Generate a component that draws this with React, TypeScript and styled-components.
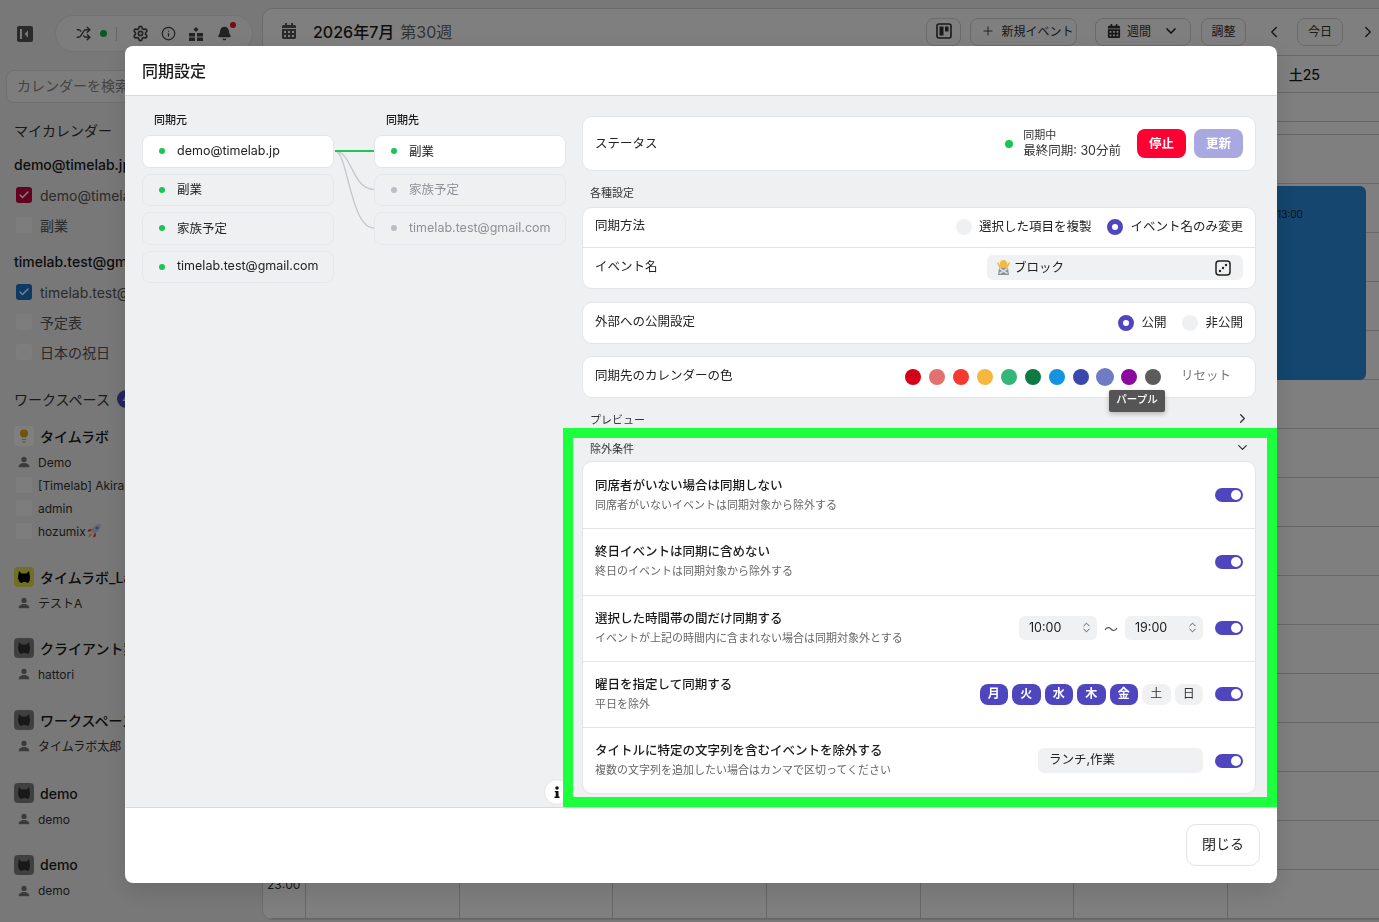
import React from 'react';
import styled, { createGlobalStyle } from 'styled-components';
import { Bell, Check, ChevronDown, ChevronLeft, ChevronRight, ChevronsUpDown, Info, Lightbulb, Plus, Settings, Shuffle } from 'lucide-react';
import { BsPersonFill } from 'react-icons/bs';
import { FaCalendarAlt } from 'react-icons/fa';

const INDIGO = '#4f46bf';

const SWATCHES = ['#d50018', '#e46f6f', '#f53b2e', '#f6b73c', '#33b679', '#0e7a42', '#1493e0', '#3949ab', '#6f7cc4', '#8a0a9e', '#5c5c5c'];
const DAYS = [
  { label: '月', on: true },
  { label: '火', on: true },
  { label: '水', on: true },
  { label: '木', on: true },
  { label: '金', on: true },
  { label: '土', on: false },
  { label: '日', on: false },
];

const GlobalStyle = createGlobalStyle`
  html, body {
    margin: 0;
    height: 100%;
    overflow: hidden;
    background: #f0f0f0;
    color: #1a1a1a;
    font-family: Inter, "Noto Sans CJK JP", sans-serif;
  }
  * { box-sizing: border-box; }
`;

function PanelIcon() {
  return (
    <svg width="18" height="18" viewBox="0 0 18 18">
      <path fill="#555" fillRule="evenodd" d="M3 1h12a2 2 0 0 1 2 2v12a2 2 0 0 1-2 2H3a2 2 0 0 1-2-2V3a2 2 0 0 1 2-2zm1 3v10h2V4zm8 1.500L8.500 9l3.500 3.500z" />
    </svg>
  );
}

function BlocksIcon() {
  return (
    <svg width="16" height="16" viewBox="0 0 16 16" fill="#444">
      <path d="M8 1l2.500 2.500L8 6 5.500 3.500z" />
      <rect x="1" y="7" width="6" height="3.500" />
      <rect x="9" y="7" width="6" height="3.500" />
      <rect x="1" y="11.500" width="6" height="3.500" />
      <rect x="9" y="11.500" width="6" height="3.500" />
    </svg>
  );
}

function BoardIcon() {
  return (
    <svg width="16" height="16" viewBox="0 0 16 16">
      <rect x="1" y="1" width="14" height="14" rx="2" fill="none" stroke="#333" strokeWidth="1.600" />
      <rect x="3.500" y="3.500" width="4" height="9" fill="#333" />
      <rect x="9" y="3.500" width="3.500" height="5" fill="#333" />
    </svg>
  );
}

function DiceIcon() {
  return (
    <svg width="16" height="16" viewBox="0 0 16 16" fill="#222">
      <rect x="1" y="1" width="14" height="14" rx="3" fill="none" stroke="#222" strokeWidth="1.500" />
      <circle cx="5" cy="11" r="1.200" />
      <circle cx="8" cy="8" r="1.200" />
      <circle cx="11" cy="5" r="1.200" />
    </svg>
  );
}

function CatLogo({ color }: { color: string }) {
  return (
    <svg width="14" height="14" viewBox="0 0 14 14">
      <path fill={color} d="M2 1l2.500 2.500h5L12 1l1 6c0 3-1 6-2.500 6-.8 0-1-1-1.500-1H6c-.5 0-.7 1-1.500 1C3 13 1 10 1 7z" />
    </svg>
  );
}

function RocketEmoji() {
  return (
    <svg width="16" height="16" viewBox="0 0 16 16">
      <path fill="#c8d0dc" d="M15 1c-4 0-7 2-9 5L4.500 8l3.500 3.500L10 10c3-2 5-5 5-9z" />
      <path fill="#5a8fd6" d="M11 3.500a1.500 1.500 0 1 0 .01 0z" />
      <path fill="#e0242e" d="M6 6L2.500 6.500 1.500 9 4.500 8zM10 10l-.5 3.500L7 14.500 8 11.500z" />
      <path fill="#f5a623" d="M4 10l2 2-4 3z" />
    </svg>
  );
}

function PersonEmoji() {
  return (
    <svg width="15" height="16" viewBox="0 0 15 16">
      <path fill="#8b8f96" d="M3 9h9l1 7H2z" />
      <path fill="#f4b942" d="M2 3l2 3h7l2-3 1 1-2.500 5h-8L1 4z" />
      <circle cx="7.500" cy="4.500" r="3.500" fill="#f4b942" />
      <path stroke="#d9dce0" strokeWidth="1.500" d="M3.500 9.500l8 5M11.500 9.500l-8 5" />
    </svg>
  );
}

function HelpGlyph() {
  return (
    <svg width="6" height="12" viewBox="0 0 6 12" fill="#111">
      <circle cx="3" cy="2" r="1.800" />
      <path d="M.8 5h3.700v5.500H5.500V12H.5v-1.500h1.200V6.300H.8z" />
    </svg>
  );
}

function Toggle() {
  return (
    <ToggleTrack>
      <ToggleKnob />
    </ToggleTrack>
  );
}

function RadioOption({ label, checked }: { label: string; checked?: boolean }) {
  return (
    <RadioLabel>
      <RadioMark $checked={checked} />
      {label}
    </RadioLabel>
  );
}

function TimeSelect({ value }: { value: string }) {
  return (
    <SelectBox>
      {value}
      <ChevronsUpDown size={13} color="#444" strokeWidth={1.600} />
    </SelectBox>
  );
}

function Member({ name, empty, children }: { name: string; empty?: boolean; children?: React.ReactNode }) {
  return (
    <MemberRow>
      <MemberIcon>{empty ? <EmptyBox /> : <BsPersonFill size={14} color="#777" />}</MemberIcon>
      {name}
      {children}
    </MemberRow>
  );
}

function Workspace({ name, logo, top = 22, children }: { name: string; logo: React.ReactNode; top?: number; children: React.ReactNode }) {
  return (
    <WorkspaceGroup $top={top}>
      <WorkspaceHead>
        {logo}
        {name}
      </WorkspaceHead>
      {children}
    </WorkspaceGroup>
  );
}

function CalendarCheck({ label, color }: { label: string; color?: string }) {
  return (
    <CheckRow>
      <CheckBox $color={color}>{color && <Check size={12} color="#fff" strokeWidth={3} />}</CheckBox>
      {label}
    </CheckRow>
  );
}

function Sidebar() {
  return (
    <Side>
      <TopRow>
        <PanelIcon />
        <ToolPill>
          <Shuffle size={15} color="#444" strokeWidth={2.200} />
          <StatusLed />
          <ToolDivider />
          <Settings size={17} color="#444" strokeWidth={2.400} />
          <Info size={15} color="#444" strokeWidth={2} />
          <BlocksIcon />
          <BellWrap>
            <Bell size={15} color="#444" fill="#444" />
            <BellBadge />
          </BellWrap>
        </ToolPill>
      </TopRow>
      <SearchBox>カレンダーを検索</SearchBox>
      <SectionTitle>マイカレンダー</SectionTitle>
      <AccountName>demo@timelab.jp</AccountName>
      <CheckList>
        <CalendarCheck label="demo@timelab.jp" color="#c9003f" />
        <CalendarCheck label="副業" />
      </CheckList>
      <AccountName $second>timelab.test@gmail.com</AccountName>
      <CheckList>
        <CalendarCheck label="timelab.test@gmail.com" color="#1a73c8" />
        <CalendarCheck label="予定表" />
        <CalendarCheck label="日本の祝日" />
      </CheckList>
      <WorkspaceTitle>
        ワークスペース
        <CountBadge>4</CountBadge>
      </WorkspaceTitle>
      <Workspace
        top={15}
        name="タイムラボ"
        logo={
          <LogoBox $bg="#ffffff">
            <Lightbulb size={14} color="#e8a813" fill="#e8a813" />
          </LogoBox>
        }
      >
        <Member name="Demo" />
        <Member name="[Timelab] Akira Suzuki" empty />
        <Member name="admin" empty />
        <Member name="hozumix" empty>
          <RocketEmoji />
        </Member>
      </Workspace>
      <Workspace name="タイムラボ_Lab" logo={<LogoBox $bg="#dfe04a"><CatLogo color="#000" /></LogoBox>}>
        <Member name="テストA" />
      </Workspace>
      <Workspace name="クライアント案件" logo={<LogoBox $bg="#808080"><CatLogo color="#333" /></LogoBox>}>
        <Member name="hattori" />
      </Workspace>
      <Workspace name="ワークスペース" logo={<LogoBox $bg="#808080"><CatLogo color="#333" /></LogoBox>}>
        <Member name="タイムラボ太郎" />
      </Workspace>
      <Workspace top={24} name="demo" logo={<LogoBox $bg="#808080"><CatLogo color="#333" /></LogoBox>}>
        <Member name="demo" />
      </Workspace>
      <Workspace name="demo" logo={<LogoBox $bg="#808080"><CatLogo color="#333" /></LogoBox>}>
        <Member name="demo" />
      </Workspace>
    </Side>
  );
}

function CalendarPanel() {
  return (
    <Main>
      <MainHeader>
        <TitleGroup>
          <FaCalendarAlt size={16} color="#555" />
          <MonthTitle>2026年7月</MonthTitle>
          <WeekTitle>第30週</WeekTitle>
        </TitleGroup>
        <HeaderActions>
          <HeaderButton $w={35}>
            <BoardIcon />
          </HeaderButton>
          <HeaderButton $w={107} $ml={9} $pl={8}>
            <Plus size={14} color="#333" strokeWidth={1.500} />
            新規イベント
          </HeaderButton>
          <HeaderButton $w={96} $ml={18}>
            <FaCalendarAlt size={14} color="#333" />
            週間
            <ViewChevron size={16} color="#222" strokeWidth={2.500} />
          </HeaderButton>
          <HeaderButton $w={45} $ml={10}>
            調整
          </HeaderButton>
          <NavArrow $ml={19}>
            <ChevronLeft size={18} color="#333" />
          </NavArrow>
          <HeaderButton $w={46} $ml={14}>
            今日
          </HeaderButton>
          <NavArrow $ml={16}>
            <ChevronRight size={18} color="#333" />
          </NavArrow>
        </HeaderActions>
      </MainHeader>
      <DayHeader>
        <DayLabel>土25</DayLabel>
      </DayHeader>
      <AllDayBand />
      <TimeGrid>
        <TimeAxis>
          <HourLabel>23:00</HourLabel>
        </TimeAxis>
        <DayColumn />
        <DayColumn />
        <DayColumn />
        <DayColumn />
        <DayColumn />
        <DayColumn />
        <DayColumn>
          <EventBlock>13:00</EventBlock>
        </DayColumn>
      </TimeGrid>
    </Main>
  );
}

function SyncColumns() {
  return (
    <SyncPane>
      <SyncColumn>
        <ColumnLabel>同期元</ColumnLabel>
        <SyncCard $active><SyncDot />demo@timelab.jp</SyncCard>
        <SyncCard><SyncDot />副業</SyncCard>
        <SyncCard><SyncDot />家族予定</SyncCard>
        <SyncCard><SyncDot />timelab.test@gmail.com</SyncCard>
      </SyncColumn>
      <ConnectorSvg width="40" height="110" viewBox="0 0 40 110">
        <path d="M1 16C18 16 18 54.500 40 54.500" fill="none" stroke="#c6c7ca" strokeWidth="1.300" />
        <path d="M1 16C14 16 16 93 40 93" fill="none" stroke="#c6c7ca" strokeWidth="1.300" />
        <path d="M1 16H40" fill="none" stroke="#1fc64f" strokeWidth="2" />
      </ConnectorSvg>
      <SyncColumn>
        <ColumnLabel>同期先</ColumnLabel>
        <SyncCard $active><SyncDot />副業</SyncCard>
        <SyncCard $muted><SyncDot $muted />家族予定</SyncCard>
        <SyncCard $muted><SyncDot $muted />timelab.test@gmail.com</SyncCard>
      </SyncColumn>
    </SyncPane>
  );
}

function SettingsPane() {
  return (
    <SettingsColumn>
      <Card>
        <StatusRow>
          <StatusLabel>ステータス</StatusLabel>
          <StatusGroup>
            <SyncState>
              <SyncStateDot />
              <SyncStateText>
                <small>同期中</small>
                <span>最終同期: 30分前</span>
              </SyncStateText>
            </SyncState>
            <ActionButton $bg="#ff0033">停止</ActionButton>
            <ActionButton $bg="#a9a8e0">更新</ActionButton>
          </StatusGroup>
        </StatusRow>
      </Card>

      <SectionHead>各種設定</SectionHead>
      <Card>
        <Row $h={38.5}>
          <RowLabel>同期方法</RowLabel>
          <RadioGroup>
            <RadioOption label="選択した項目を複製" />
            <RadioOption label="イベント名のみ変更" checked />
          </RadioGroup>
        </Row>
        <Row $h={40}>
          <RowLabel>イベント名</RowLabel>
          <NameField>
            <NameValue>
              <PersonEmoji />
              ブロック
            </NameValue>
            <DiceIcon />
          </NameField>
        </Row>
      </Card>

      <Card $top={13}>
        <Row $h={40}>
          <RowLabel>外部への公開設定</RowLabel>
          <RadioGroup>
            <RadioOption label="公開" checked />
            <RadioOption label="非公開" />
          </RadioGroup>
        </Row>
      </Card>

      <Card $top={12}>
        <Row $h={40}>
          <RowLabel>同期先のカレンダーの色</RowLabel>
          <ColorGroup>
            <SwatchList>
              {SWATCHES.map((color, i) => (
                <Swatch key={color} $color={color} $hover={i === 8}>
                  {i === 8 && <Tooltip>パープル</Tooltip>}
                </Swatch>
              ))}
            </SwatchList>
            <ResetLink>リセット</ResetLink>
          </ColorGroup>
        </Row>
      </Card>

      <CollapseHead $top={13}>
        プレビュー
        <ChevronRight size={15} color="#333" />
      </CollapseHead>
      <CollapseHead $top={13}>
        除外条件
        <ChevronDown size={15} color="#333" />
      </CollapseHead>
      <Card $top={5.5}>
        <RuleRow>
          <RuleText>
            <RuleTitle>同席者がいない場合は同期しない</RuleTitle>
            <RuleNote>同席者がいないイベントは同期対象から除外する</RuleNote>
          </RuleText>
          <Toggle />
        </RuleRow>
        <RuleRow>
          <RuleText>
            <RuleTitle>終日イベントは同期に含めない</RuleTitle>
            <RuleNote>終日のイベントは同期対象から除外する</RuleNote>
          </RuleText>
          <Toggle />
        </RuleRow>
        <RuleRow>
          <RuleText>
            <RuleTitle>選択した時間帯の間だけ同期する</RuleTitle>
            <RuleNote>イベントが上記の時間内に含まれない場合は同期対象外とする</RuleNote>
          </RuleText>
          <RuleControls>
            <TimeSelect value="10:00" />
            <Tilde>〜</Tilde>
            <TimeSelect value="19:00" />
            <ToggleGap>
              <Toggle />
            </ToggleGap>
          </RuleControls>
        </RuleRow>
        <RuleRow>
          <RuleText>
            <RuleTitle>曜日を指定して同期する</RuleTitle>
            <RuleNote>平日を除外</RuleNote>
          </RuleText>
          <RuleControls>
            <DayList>
              {DAYS.map(d => (
                <DayPill key={d.label} $on={d.on}>
                  {d.label}
                </DayPill>
              ))}
            </DayList>
            <ToggleGap>
              <Toggle />
            </ToggleGap>
          </RuleControls>
        </RuleRow>
        <RuleRow>
          <RuleText>
            <RuleTitle>タイトルに特定の文字列を含むイベントを除外する</RuleTitle>
            <RuleNote>複数の文字列を追加したい場合はカンマで区切ってください</RuleNote>
          </RuleText>
          <RuleControls>
            <KeywordField>ランチ,作業</KeywordField>
            <ToggleGap>
              <Toggle />
            </ToggleGap>
          </RuleControls>
        </RuleRow>
      </Card>
    </SettingsColumn>
  );
}

function App() {
  return (
    <>
      <GlobalStyle />
      <Page>
        <Sidebar />
        <CalendarPanel />
      </Page>
      <Backdrop />
      <Modal>
        <ModalHeader>同期設定</ModalHeader>
        <ModalBody>
          <SyncColumns />
          <SettingsPane />
          <FloatingHelp>
            <HelpGlyph />
          </FloatingHelp>
        </ModalBody>
        <ModalFooter>
          <CloseButton>閉じる</CloseButton>
        </ModalFooter>
        <Highlight />
      </Modal>
    </>
  );
}

const Page = styled.div`
  display: flex;
  width: 1379px;
  height: 922px;
  overflow: hidden;
`;

const Side = styled.aside`
  flex: 0 0 262px;
  display: flex;
  flex-direction: column;
  padding-top: 15px;
  white-space: nowrap;
  overflow: hidden;
`;

const TopRow = styled.div`
  display: flex;
  align-items: center;
  height: 37px;
  padding-left: 16px;
  gap: 21px;
`;

const ToolPill = styled.div`
  display: flex;
  align-items: center;
  width: 198px;
  height: 37px;
  padding: 0 14px 0 20px;
  gap: 12px;
  background: #fafafa;
  border: 1px solid #e4e4e4;
  border-radius: 19px;
`;

const StatusLed = styled.span`
  width: 7px;
  height: 7px;
  margin-left: -3px;
  border-radius: 50%;
  background: #16b04a;
`;

const ToolDivider = styled.span`
  width: 1px;
  height: 14px;
  background: #c8c8c8;
  margin: 0 3px 0 -3px;
`;

const BellWrap = styled.span`
  position: relative;
  display: flex;
  margin-left: 1px;
`;

const BellBadge = styled.span`
  position: absolute;
  top: -4px;
  right: -4px;
  width: 6px;
  height: 6px;
  border-radius: 50%;
  background: #f01030;
`;

const SearchBox = styled.div`
  margin: 18px 0 0 6px;
  width: 240px;
  height: 33px;
  padding: 0 10px 3px;
  display: flex;
  align-items: center;
  font-size: 14px;
  color: #888;
  background: #fafafa;
  border: 1px solid #e0e0e0;
  border-radius: 8px;
`;

const SectionTitle = styled.div`
  margin: 18px 0 0 14px;
  height: 20px;
  line-height: 20px;
  font-size: 14px;
  color: #333;
`;

const AccountName = styled.div<{ $second?: boolean }>`
  margin: ${p => (p.$second ? 12 : 14)}px 0 0 14px;
  height: 20px;
  line-height: 20px;
  font-size: 14px;
  font-weight: 500;
`;

const CheckList = styled.div`
  display: flex;
  flex-direction: column;
  margin-top: 5px;
`;

const CheckRow = styled.div`
  display: flex;
  align-items: center;
  height: 30px;
  padding-left: 16px;
  gap: 8px;
  font-size: 14px;
  color: #555;
`;

const CheckBox = styled.span<{ $color?: string }>`
  display: flex;
  align-items: center;
  justify-content: center;
  width: 16px;
  height: 16px;
  border-radius: 3px;
  background: ${p => p.$color || '#fafafa'};
`;

const WorkspaceTitle = styled.div`
  display: flex;
  align-items: center;
  gap: 7px;
  margin: 22px 0 0 14px;
  height: 20px;
  font-size: 14px;
  color: #333;
`;

const CountBadge = styled.span`
  width: 18px;
  height: 18px;
  line-height: 18px;
  border-radius: 50%;
  background: #4f46bf;
  color: #fff;
  font-size: 11px;
  text-align: center;
`;

const WorkspaceGroup = styled.div<{ $top: number }>`
  margin-top: ${p => p.$top}px;
`;

const WorkspaceHead = styled.div`
  display: flex;
  align-items: center;
  gap: 6px;
  height: 24px;
  padding-left: 14px;
  margin-bottom: 2.500px;
  font-size: 14px;
  font-weight: 500;
`;

const LogoBox = styled.span<{ $bg: string }>`
  display: flex;
  align-items: center;
  justify-content: center;
  width: 20px;
  height: 20px;
  border-radius: 4px;
  background: ${p => p.$bg};
`;

const MemberRow = styled.div`
  display: flex;
  align-items: center;
  height: 23px;
  padding-left: 16px;
  font-size: 12px;
  color: #333;
`;

const MemberIcon = styled.span`
  display: flex;
  align-items: center;
  justify-content: center;
  width: 16px;
  margin-right: 6px;
`;

const EmptyBox = styled.span`
  width: 16px;
  height: 16px;
  border-radius: 3px;
  background: #fafafa;
`;

const Main = styled.main`
  flex: 1;
  display: flex;
  flex-direction: column;
  margin: 8px -4px 2px 0;
  background: #fff;
  border: 1px solid #d6d6d6;
  border-radius: 10px 0 0 10px;
  overflow: hidden;
`;

const MainHeader = styled.header`
  flex: 0 0 47px;
  display: flex;
  align-items: center;
  justify-content: space-between;
  padding: 0 5px 0 18px;
  border-bottom: 1px solid #cfcfcf;
`;

const TitleGroup = styled.div`
  display: flex;
  align-items: center;
  gap: 6px;
  padding-bottom: 2px;
`;

const MonthTitle = styled.span`
  margin-left: 10px;
  font-size: 16px;
  font-weight: 500;
`;

const WeekTitle = styled.span`
  font-size: 16px;
  color: #666;
`;

const HeaderActions = styled.div`
  display: flex;
  align-items: center;
`;

const HeaderButton = styled.div<{ $w: number; $ml?: number; $pl?: number }>`
  display: flex;
  align-items: center;
  justify-content: center;
  gap: 6px;
  width: ${p => p.$w}px;
  height: 28px;
  margin-left: ${p => p.$ml || 0}px;
  padding: 0 0 3px ${p => p.$pl || 0}px;
  border: 1px solid #d6d6d6;
  border-radius: 8px;
  font-size: 12px;
  color: #333;
`;

const ViewChevron = styled(ChevronDown)`
  margin-left: 6px;
`;

const NavArrow = styled.span<{ $ml: number }>`
  display: flex;
  margin-left: ${p => p.$ml}px;
`;

const DayHeader = styled.div`
  flex: 0 0 37px;
  display: flex;
  align-items: center;
  justify-content: flex-end;
  padding-right: 62px;
  border-bottom: 1px solid #cfcfcf;
`;

const DayLabel = styled.span`
  font-size: 14px;
  font-weight: 500;
`;

const AllDayBand = styled.div`
  flex: 0 0 42px;
  border-bottom: 1px solid #cfcfcf;
  background: linear-gradient(#fff 28px, #cfcfcf 28px, #cfcfcf 29px, #fff 29px);
`;

const TimeGrid = styled.div`
  flex: 1;
  display: grid;
  grid-template-columns: 42px repeat(7, 153.7px);
  background: repeating-linear-gradient(#fff 0, #fff 48px, #cfcfcf 48px, #cfcfcf 49px);
`;

const TimeAxis = styled.div`
  position: relative;
`;

const HourLabel = styled.span`
  position: absolute;
  left: 4px;
  top: 742px;
  font-size: 12px;
  color: #333;
`;

const DayColumn = styled.div`
  position: relative;
  border-left: 1px solid #cfcfcf;
`;

const EventBlock = styled.div`
  position: absolute;
  left: 0;
  right: 15px;
  top: 51px;
  height: 194px;
  padding: 22px 0 0 49px;
  background: #288cde;
  border-radius: 6px;
  font-size: 10px;
  color: #222;
`;

const Backdrop = styled.div`
  position: fixed;
  inset: 0;
  background: rgba(0, 0, 0, 0.5);
`;

const Modal = styled.section`
  position: fixed;
  left: 125px;
  top: 46px;
  width: 1152px;
  height: 837px;
  display: flex;
  flex-direction: column;
  background: #fff;
  border-radius: 8px;
  overflow: hidden;
  box-shadow: 0 8px 24px rgba(0, 0, 0, 0.12);
`;

const ModalHeader = styled.h2`
  flex: 0 0 50px;
  margin: 0;
  padding: 1px 17px 0;
  line-height: 48px;
  font-size: 16px;
  font-weight: 500;
  border-bottom: 1px solid #d9dadd;
`;

const ModalBody = styled.div`
  position: relative;
  flex: 1;
  min-height: 0;
  display: flex;
  gap: 16px;
  padding: 0 21px 0 17px;
  background: #eff0f2;
  overflow: hidden;
`;

const ModalFooter = styled.footer`
  flex: 0 0 76px;
  display: flex;
  align-items: center;
  justify-content: flex-end;
  padding: 0 17px 2px 0;
  border-top: 1px solid #d9dadd;
`;

const CloseButton = styled.button`
  width: 74px;
  height: 42px;
  padding: 0 0 3px;
  background: #fff;
  border: 1px solid #e2e3e6;
  border-radius: 10px;
  font: inherit;
  font-size: 14px;
  color: #222;
`;

const Highlight = styled.div`
  position: absolute;
  left: 438px;
  top: 382px;
  right: 0;
  bottom: 76px;
  border: 10px solid #1bff3c;
  pointer-events: none;
`;

const FloatingHelp = styled.div`
  position: absolute;
  left: 419px;
  bottom: 2px;
  width: 26px;
  height: 26px;
  display: flex;
  align-items: center;
  justify-content: center;
  background: #fff;
  border: 1px solid #e4e5e8;
  border-radius: 50%;
`;

const SyncPane = styled.div`
  flex: 0 0 424px;
  display: flex;
  align-items: flex-start;
  padding-top: 16px;
`;

const SyncColumn = styled.div`
  flex: 0 0 192px;
  display: flex;
  flex-direction: column;
  gap: 6px;
`;

const ColumnLabel = styled.div`
  height: 16px;
  margin-bottom: 1px;
  padding-left: 12px;
  line-height: 16px;
  font-size: 11px;
  font-weight: 500;
`;

const SyncCard = styled.div<{ $active?: boolean; $muted?: boolean }>`
  display: flex;
  align-items: center;
  gap: 12px;
  height: 32.500px;
  padding: 0 0 2px 16px;
  font-size: 12.500px;
  color: ${p => (p.$muted ? '#8d9098' : '#222')};
  background: ${p => (p.$active ? '#fff' : 'transparent')};
  border: 1px solid ${p => (p.$active ? '#e4e5e8' : '#e6e7ea')};
  border-radius: 8px;
`;

const SyncDot = styled.span<{ $muted?: boolean }>`
  flex: none;
  width: 6px;
  height: 6px;
  margin-top: 2px;
  border-radius: 50%;
  background: ${p => (p.$muted ? '#b9bdc6' : '#18c653')};
`;

const ConnectorSvg = styled.svg`
  flex: none;
  margin-top: 23px;
`;

const SettingsColumn = styled.div`
  flex: 0 0 674px;
  padding-top: 20px;
`;

const Card = styled.div<{ $top?: number }>`
  margin-top: ${p => p.$top || 0}px;
  background: #fff;
  border: 1px solid #e4e5e8;
  border-radius: 10px;
`;

const Row = styled.div<{ $h: number }>`
  display: flex;
  align-items: center;
  justify-content: space-between;
  height: ${p => p.$h}px;
  padding: 0 12px;
  & + & {
    border-top: 1px solid #e4e5e8;
    height: ${p => p.$h + 1}px;
  }
`;

const StatusRow = styled.div`
  display: flex;
  align-items: center;
  justify-content: space-between;
  height: 53px;
  padding: 0 12px;
`;

const RowLabel = styled.span`
  padding-bottom: 5px;
  font-size: 12.500px;
  color: #222;
`;

const StatusLabel = styled(RowLabel)`
  padding-bottom: 2px;
`;

const StatusGroup = styled.div`
  display: flex;
  align-items: center;
  gap: 8px;
`;

const SyncState = styled.div`
  display: flex;
  align-items: center;
  gap: 10px;
  margin-right: 8px;
`;

const SyncStateDot = styled.span`
  width: 8px;
  height: 8px;
  border-radius: 50%;
  background: #18c653;
`;

const SyncStateText = styled.div`
  display: flex;
  flex-direction: column;
  padding-bottom: 2px;
  font-size: 12.500px;
  line-height: 15px;
  color: #333;
  small {
    font-size: 11px;
  }
`;

const ActionButton = styled.button<{ $bg: string }>`
  width: 49px;
  height: 29px;
  padding: 0 0 2px;
  border: none;
  border-radius: 8px;
  background: ${p => p.$bg};
  color: #fff;
  font: inherit;
  font-size: 12.500px;
  font-weight: 600;
`;

const SectionHead = styled.div`
  height: 16px;
  margin: 14px 0 6px;
  padding-left: 8px;
  line-height: 16px;
  font-size: 11px;
  color: #333;
`;

const RadioGroup = styled.div`
  display: flex;
  align-items: center;
  gap: 16px;
`;

const RadioLabel = styled.label`
  display: flex;
  align-items: center;
  gap: 7px;
  padding-bottom: 3px;
  font-size: 12.500px;
  color: #222;
`;

const RadioMark = styled.span<{ $checked?: boolean }>`
  width: 16px;
  height: 16px;
  margin-top: 3px;
  border-radius: 50%;
  background: ${p => (p.$checked ? '#fff' : '#eff0f2')};
  border: ${p => (p.$checked ? `5px solid ${INDIGO}` : 'none')};
`;

const NameField = styled.div`
  display: flex;
  align-items: center;
  justify-content: space-between;
  width: 256px;
  height: 25px;
  padding: 0 12px 0 9px;
  border-radius: 6px;
  background: #f0f1f3;
`;

const NameValue = styled.span`
  display: flex;
  align-items: center;
  gap: 3px;
  padding-bottom: 2px;
  font-size: 12.500px;
  color: #222;
`;

const ColorGroup = styled.div`
  display: flex;
  align-items: center;
  gap: 20px;
  padding-right: 12px;
`;

const SwatchList = styled.div`
  display: flex;
  align-items: center;
  gap: 8px;
`;

const Swatch = styled.span<{ $color: string; $hover?: boolean }>`
  position: relative;
  width: ${p => (p.$hover ? 18 : 16)}px;
  height: ${p => (p.$hover ? 18 : 16)}px;
  margin: ${p => (p.$hover ? '0 -1px' : 0)};
  border-radius: 50%;
  background: ${p => p.$color};
`;

const Tooltip = styled.span`
  position: absolute;
  left: 13px;
  top: 22px;
  width: 56px;
  height: 22px;
  line-height: 20px;
  text-align: center;
  font-size: 10.500px;
  font-weight: 500;
  color: #fff;
  background: #555;
  border-radius: 2px;
  box-shadow: 0 2px 5px rgba(0, 0, 0, 0.25);
  z-index: 1;
`;

const ResetLink = styled.span`
  padding-bottom: 5px;
  font-size: 12.500px;
  color: #777;
`;

const CollapseHead = styled.div<{ $top: number }>`
  display: flex;
  align-items: center;
  justify-content: space-between;
  height: 16px;
  margin-top: ${p => p.$top}px;
  padding: 0 6px 0 8px;
  font-size: 11px;
  color: #333;
`;

const RuleRow = styled.div`
  display: flex;
  align-items: center;
  justify-content: space-between;
  height: 66.250px;
  padding: 0 12px;
  & + & {
    border-top: 1px solid #e4e5e8;
  }
`;

const RuleText = styled.div`
  display: flex;
  flex-direction: column;
  gap: 2px;
  padding-bottom: 1px;
`;

const RuleTitle = styled.div`
  line-height: 18px;
  font-size: 12.500px;
  font-weight: 500;
  color: #1a1a1a;
`;

const RuleNote = styled.div`
  line-height: 16px;
  font-size: 11px;
  color: #666;
`;

const RuleControls = styled.div`
  display: flex;
  align-items: center;
`;

const ToggleGap = styled.div`
  margin-left: 12px;
  display: flex;
`;

const ToggleTrack = styled.span`
  display: flex;
  align-items: center;
  justify-content: flex-end;
  width: 28px;
  height: 14px;
  padding-right: 2px;
  border-radius: 7px;
  background: ${INDIGO};
`;

const ToggleKnob = styled.span`
  width: 10px;
  height: 10px;
  border-radius: 50%;
  background: #fff;
`;

const SelectBox = styled.div`
  display: flex;
  align-items: center;
  justify-content: space-between;
  width: 78px;
  height: 24px;
  padding: 0 4px 1px 10px;
  border-radius: 6px;
  background: #f0f1f3;
  font-size: 12.500px;
  color: #222;
`;

const Tilde = styled.span`
  width: 28px;
  text-align: center;
  font-size: 14px;
  color: #555;
`;

const DayList = styled.div`
  display: flex;
  gap: 4px;
`;

const DayPill = styled.span<{ $on: boolean }>`
  width: 28.500px;
  height: 21px;
  line-height: 19px;
  text-align: center;
  border-radius: 8px;
  font-size: 12px;
  font-weight: ${p => (p.$on ? 600 : 400)};
  color: ${p => (p.$on ? '#fff' : '#333')};
  background: ${p => (p.$on ? INDIGO : '#f0f1f3')};
`;

const KeywordField = styled.div`
  width: 165px;
  height: 25px;
  padding: 0 11px;
  line-height: 23px;
  border-radius: 6px;
  background: #f0f1f3;
  font-size: 12.500px;
  color: #222;
`;

export default App;
